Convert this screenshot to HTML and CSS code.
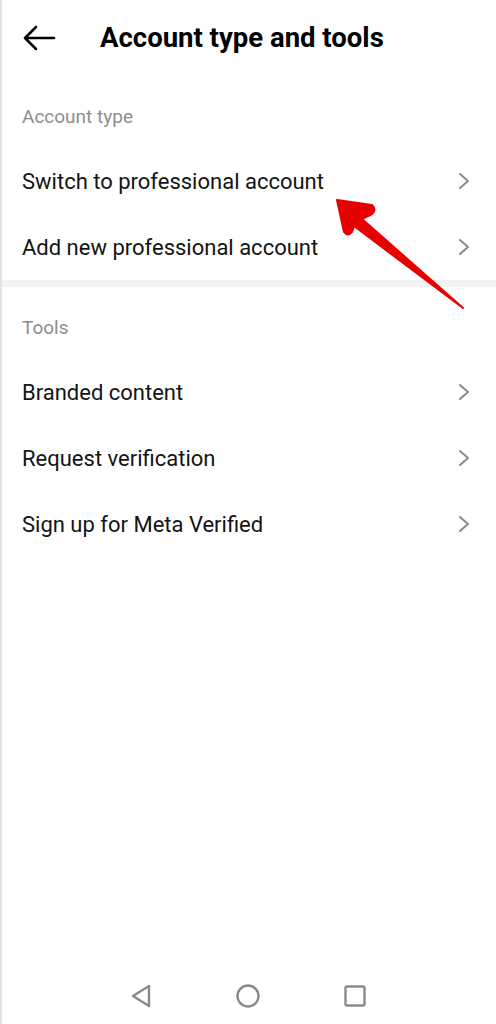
FILE: index.html
```html
<!DOCTYPE html>
<html lang="en">
<head>
    <meta charset="UTF-8">
    <meta name="viewport" content="width=device-width, initial-scale=1.0">
    <title>Account type and tools</title>
    <link rel="stylesheet" href="styles.css">
</head>
<body>
    <div class="screen">
        <header class="top-bar">
            <svg class="back-icon" width="34" height="26" viewBox="0 0 34 26">
                <path d="M3 13 H32 M14 2 L3 13 L14 24" fill="none" stroke="#000" stroke-width="2.6" stroke-linecap="round" stroke-linejoin="round"/>
            </svg>
            <h1>Account type and tools</h1>
        </header>

        <section class="group">
            <div class="group-title">Account type</div>
            <div class="row">
                <span>Switch to professional account</span>
                <svg class="chevron" width="12" height="18" viewBox="0 0 12 18"><path d="M2 2 L10 9 L2 16" fill="none" stroke="#8a8a8a" stroke-width="2" stroke-linecap="round" stroke-linejoin="round"/></svg>
            </div>
            <div class="row">
                <span>Add new professional account</span>
                <svg class="chevron" width="12" height="18" viewBox="0 0 12 18"><path d="M2 2 L10 9 L2 16" fill="none" stroke="#8a8a8a" stroke-width="2" stroke-linecap="round" stroke-linejoin="round"/></svg>
            </div>
        </section>

        <div class="divider"></div>

        <section class="group">
            <div class="group-title">Tools</div>
            <div class="row">
                <span>Branded content</span>
                <svg class="chevron" width="12" height="18" viewBox="0 0 12 18"><path d="M2 2 L10 9 L2 16" fill="none" stroke="#8a8a8a" stroke-width="2" stroke-linecap="round" stroke-linejoin="round"/></svg>
            </div>
            <div class="row">
                <span>Request verification</span>
                <svg class="chevron" width="12" height="18" viewBox="0 0 12 18"><path d="M2 2 L10 9 L2 16" fill="none" stroke="#8a8a8a" stroke-width="2" stroke-linecap="round" stroke-linejoin="round"/></svg>
            </div>
            <div class="row">
                <span>Sign up for Meta Verified</span>
                <svg class="chevron" width="12" height="18" viewBox="0 0 12 18"><path d="M2 2 L10 9 L2 16" fill="none" stroke="#8a8a8a" stroke-width="2" stroke-linecap="round" stroke-linejoin="round"/></svg>
            </div>
        </section>

        <!-- red pointer drawn over the list -->
        <svg class="pointer" width="496" height="320" viewBox="0 0 496 320">
            <path d="M337 200 L372 205 Q377 210 372 214 L362 219 L463 308 L354 226 L352 232 Q348 237 344 232 Z" fill="#e60000" stroke="#e60000" stroke-width="2" stroke-linejoin="round"/>
        </svg>

        <nav class="nav-bar">
            <svg width="24" height="26" viewBox="0 0 24 26"><path d="M20 3 L20 23 L4 13 Z" fill="none" stroke="#8a8a8a" stroke-width="2.4" stroke-linejoin="round"/></svg>
            <svg width="26" height="26" viewBox="0 0 26 26"><circle cx="13" cy="13" r="10.5" fill="none" stroke="#8a8a8a" stroke-width="2.4"/></svg>
            <svg width="24" height="24" viewBox="0 0 24 24"><rect x="2.5" y="2.5" width="19" height="19" rx="1.5" fill="none" stroke="#8a8a8a" stroke-width="2.4"/></svg>
        </nav>
    </div>
</body>
</html>
```

FILE: styles.css
```css
body {
    margin: 0;
    padding: 0;
    background-color: #fff;
    font-family: Roboto, "Liberation Sans", sans-serif;
    color: #111;
}
.screen {
    position: relative;
    width: 496px;
    height: 1024px;
    box-sizing: border-box;
    border-left: 2px solid #e2e2e2;
    display: flex;
    flex-direction: column;
    overflow: hidden;
}
.top-bar {
    display: flex;
    align-items: center;
    height: 74px;
    padding-bottom: 4px;
    padding-left: 20px;
}
.back-icon {
    display: block;
    margin-top: 2px;
}
.top-bar h1 {
    margin: 0 0 0 44px;
    font-size: 27.5px;
    font-weight: bold;
    color: #000;
}
.group-title {
    height: 76px;
    padding-left: 20px;
    display: flex;
    align-items: center;
    font-size: 19px;
    color: #8e8e8e;
}
.row {
    display: flex;
    align-items: center;
    justify-content: space-between;
    height: 66px;
    padding: 0 26px 0 20px;
    font-size: 22px;
    color: #141414;
}
.group-title + .row {
    margin-top: -6px;
}
.divider {
    height: 7px;
    margin-bottom: 2px;
    background-color: #f2f2f2;
}
.pointer {
    position: absolute;
    top: 0;
    left: -2px;
}
.nav-bar {
    margin-top: auto;
    height: 56px;
    display: flex;
    align-items: center;
    justify-content: center;
    gap: 82px;
    padding-right: 2px;
}
```
